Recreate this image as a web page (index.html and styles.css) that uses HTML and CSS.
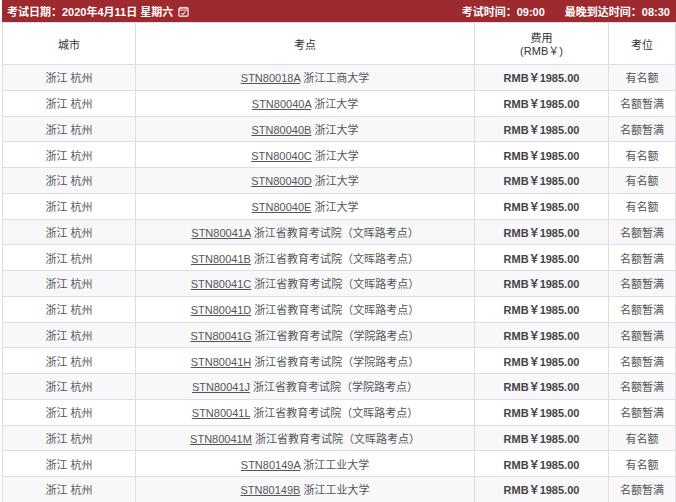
FILE: index.html
```html
<!DOCTYPE html>
<html lang="zh">
<head>
<meta charset="utf-8">
<title>考试日期</title>
<link rel="stylesheet" href="styles.css">
</head>
<body>
<div class="page">
  <div class="bar">
    <div class="bar-left">考试日期：2020年4月11日 星期六
      <svg class="cal" viewBox="0 0 12 12" width="11" height="11" aria-hidden="true">
        <rect x="1" y="2" width="10" height="9" rx="1" fill="none" stroke="#fff" stroke-width="1.2"/>
        <line x1="1" y1="4.5" x2="11" y2="4.5" stroke="#fff" stroke-width="1"/>
        <line x1="3.5" y1="0.8" x2="3.5" y2="3" stroke="#fff" stroke-width="1.2"/>
        <line x1="8.5" y1="0.8" x2="8.5" y2="3" stroke="#fff" stroke-width="1.2"/>
        <polyline points="3.8,7.4 5.4,9 8.4,6" fill="none" stroke="#fff" stroke-width="1.1"/>
      </svg>
    </div>
    <div class="bar-right">
      <span>考试时间：09:00</span>
      <span>最晚到达时间：08:30</span>
    </div>
  </div>
  <table class="grid">
    <colgroup>
      <col class="c-city"><col class="c-site"><col class="c-fee"><col class="c-seat">
    </colgroup>
    <thead>
      <tr><th>城市</th><th>考点</th><th><span class="two">费用<br>(RMB￥)</span></th><th>考位</th></tr>
    </thead>
    <tbody>
      <tr><td>浙江 杭州</td><td><a>STN80018A</a> 浙江工商大学</td><td class="fee">RMB￥1985.00</td><td>有名额</td></tr>
      <tr><td>浙江 杭州</td><td><a>STN80040A</a> 浙江大学</td><td class="fee">RMB￥1985.00</td><td>名额暂满</td></tr>
      <tr><td>浙江 杭州</td><td><a>STN80040B</a> 浙江大学</td><td class="fee">RMB￥1985.00</td><td>名额暂满</td></tr>
      <tr><td>浙江 杭州</td><td><a>STN80040C</a> 浙江大学</td><td class="fee">RMB￥1985.00</td><td>有名额</td></tr>
      <tr><td>浙江 杭州</td><td><a>STN80040D</a> 浙江大学</td><td class="fee">RMB￥1985.00</td><td>有名额</td></tr>
      <tr><td>浙江 杭州</td><td><a>STN80040E</a> 浙江大学</td><td class="fee">RMB￥1985.00</td><td>有名额</td></tr>
      <tr><td>浙江 杭州</td><td><a>STN80041A</a> 浙江省教育考试院（文晖路考点）</td><td class="fee">RMB￥1985.00</td><td>名额暂满</td></tr>
      <tr><td>浙江 杭州</td><td><a>STN80041B</a> 浙江省教育考试院（文晖路考点）</td><td class="fee">RMB￥1985.00</td><td>名额暂满</td></tr>
      <tr><td>浙江 杭州</td><td><a>STN80041C</a> 浙江省教育考试院（文晖路考点）</td><td class="fee">RMB￥1985.00</td><td>名额暂满</td></tr>
      <tr><td>浙江 杭州</td><td><a>STN80041D</a> 浙江省教育考试院（文晖路考点）</td><td class="fee">RMB￥1985.00</td><td>名额暂满</td></tr>
      <tr><td>浙江 杭州</td><td><a>STN80041G</a> 浙江省教育考试院（学院路考点）</td><td class="fee">RMB￥1985.00</td><td>名额暂满</td></tr>
      <tr><td>浙江 杭州</td><td><a>STN80041H</a> 浙江省教育考试院（学院路考点）</td><td class="fee">RMB￥1985.00</td><td>名额暂满</td></tr>
      <tr><td>浙江 杭州</td><td><a>STN80041J</a> 浙江省教育考试院（学院路考点）</td><td class="fee">RMB￥1985.00</td><td>名额暂满</td></tr>
      <tr><td>浙江 杭州</td><td><a>STN80041L</a> 浙江省教育考试院（文晖路考点）</td><td class="fee">RMB￥1985.00</td><td>名额暂满</td></tr>
      <tr><td>浙江 杭州</td><td><a>STN80041M</a> 浙江省教育考试院（文晖路考点）</td><td class="fee">RMB￥1985.00</td><td>有名额</td></tr>
      <tr><td>浙江 杭州</td><td><a>STN80149A</a> 浙江工业大学</td><td class="fee">RMB￥1985.00</td><td>有名额</td></tr>
      <tr><td>浙江 杭州</td><td><a>STN80149B</a> 浙江工业大学</td><td class="fee">RMB￥1985.00</td><td>名额暂满</td></tr>
    </tbody>
  </table>
</div>
</body>
</html>
```

FILE: styles.css
```css
html, body {
  margin: 0;
  padding: 0;
  background: #fff;
}
body {
  font-family: "Liberation Sans", "Noto Sans CJK SC", sans-serif;
  font-size: 11px;
  color: #555;
}
.page {
  padding-left: 2px;
  width: 674px;
}
.bar {
  height: 22px;
  background: #9d2a2e;
  color: #fff;
  font-weight: bold;
  display: flex;
  align-items: center;
  justify-content: space-between;
  padding: 0 6px 0 5px;
}
.bar-left {
  display: flex;
  align-items: center;
  gap: 5px;
}
.cal {
  display: block;
}
.bar-right {
  display: flex;
  gap: 20px;
}
.grid {
  width: 673px;
  border-collapse: collapse;
  table-layout: fixed;
}
.c-city { width: 133px; }
.c-site { width: 339px; }
.c-fee { width: 134px; }
.c-seat { width: 67px; }
.grid th,
.grid td {
  border: 1px solid #dedde2;
  text-align: center;
  padding: 0;
  white-space: nowrap;
}
.grid th {
  height: 41px;
  font-weight: normal;
  color: #333;
}
.two {
  display: inline-block;
  line-height: 13px;
  padding-top: 2px;
}
.grid td {
  height: 24.75px;
}
.grid tbody tr:nth-child(odd) td {
  background: #f8f8fa;
}
.grid a {
  color: #555;
  text-decoration: underline;
}
.grid td.fee {
  font-weight: bold;
  color: #444;
}
```
